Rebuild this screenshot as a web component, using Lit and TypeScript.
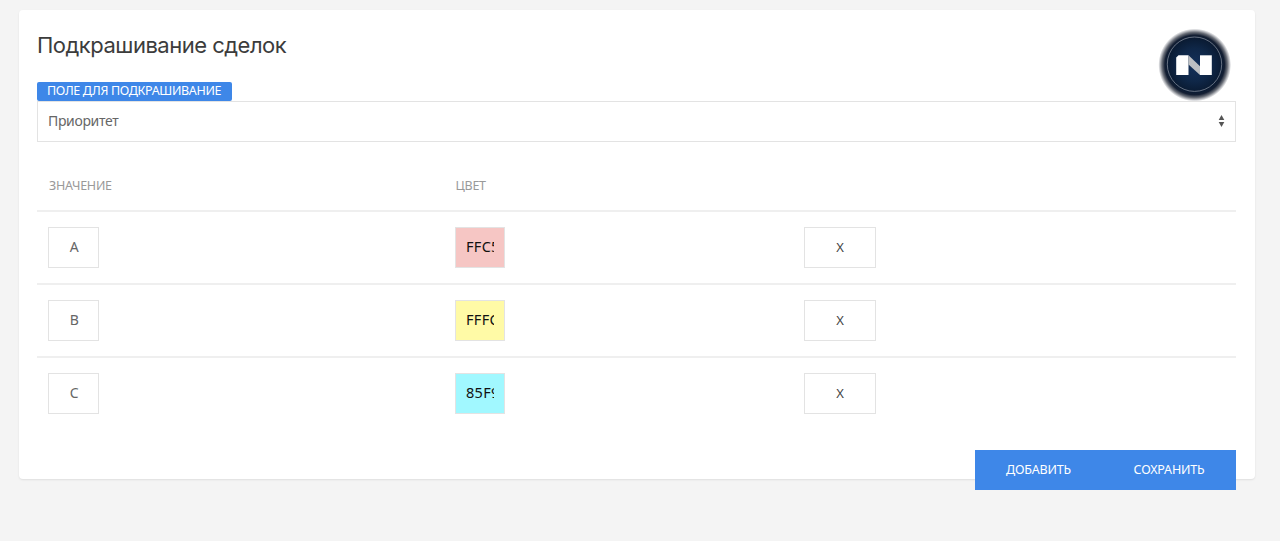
import { LitElement, html, css } from 'lit';
import { customElement, property, state } from 'lit/decorators.js';
import { styleMap } from 'lit/directives/style-map.js';

interface ColorRule {
  value: string;
  code: string;
  background: string;
}

@customElement('brand-logo')
export class BrandLogo extends LitElement {

  static styles = css`
    :host {
      display: block;
      width: 74px;
      height: 74px;
    }

    svg {
      display: block;
    }
  `;

  render() {
    return html`
      <svg width="74" height="74" viewBox="0 0 74 74">
        <defs>
          <radialGradient id="disc">
            <stop offset="0" stop-color="#14305a" />
            <stop offset="0.45" stop-color="#0f2748" />
            <stop offset="0.74" stop-color="#0a1b33" />
            <stop offset="0.82" stop-color="#141f33" />
            <stop offset="0.9" stop-color="#1c2331" stop-opacity="0.65" />
            <stop offset="1" stop-color="#2a3040" stop-opacity="0" />
          </radialGradient>
        </defs>
        <circle cx="36.7" cy="37" r="36.4" fill="url(#disc)" />
        <circle cx="36.5" cy="36.2" r="27.2" fill="none" stroke="#7d8796" stroke-width="0.8" />
        <path d="M20.5 27.3H30.5V47H18.2V29.5Z" fill="#fff" />
        <path d="M42 27.3H53.8V47H42Z" fill="#fff" />
        <path d="M30.5 27.3L42 38.2V47L30.5 36.5Z" fill="#bdbfc2" />
      </svg>
    `;
  }
}

@customElement('color-row')
export class ColorRow extends LitElement {

  static styles = css`
    :host {
      display: grid;
      flex: none;
      grid-template-columns: 406.8px 349px 1fr;
      align-items: center;
      height: 73.2px;
      padding-left: 11.2px;
      box-sizing: border-box;
      border-top: 2px solid #efefef;
    }

    .field,
    .remove {
      display: block;
      box-sizing: border-box;
      height: 41px;
      margin: 0;
      border: 1px solid #e3e3e3;
      border-radius: 0;
      outline: none;
      background: #fff;
      font-family: "Noto Sans", sans-serif;
    }

    .field {
      width: 51px;
      padding: 0 10px 2px;
      color: #666;
      font-size: 14px;
    }

    .value {
      padding-left: 11px;
      text-align: center;
    }

    .color {
      width: 50px;
      padding-bottom: 3px;
      color: #111;
      font-size: 14.5px;
      letter-spacing: 0.3px;
    }

    .remove {
      width: 72px;
      padding: 0 0 1px;
      color: #444;
      font-size: 13px;
    }
  `;

  @property({ attribute: false }) rule!: ColorRule;

  render() {
    return html`
      <div><input class="field value" .value=${this.rule.value}></div>
      <div>
        <input
          class="field color"
          style=${styleMap({ background: this.rule.background })}
          .value=${this.rule.code}
        >
      </div>
      <div><button class="remove">X</button></div>
    `;
  }
}

@customElement('app-root')
export class AppRoot extends LitElement {

  static styles = css`
    :host {
      display: block;
      box-sizing: border-box;
      height: 541px;
      padding: 10px 25px 0 19px;
      overflow: hidden;
      background: #f4f4f4;
      font-family: "Noto Sans", sans-serif;
    }

    .card {
      display: flex;
      flex-direction: column;
      box-sizing: border-box;
      height: 469px;
      padding: 18px 19px 0 18px;
      border-radius: 4px;
      background: #fff;
      box-shadow: 0 1px 2px rgba(0, 0, 0, 0.09);
    }

    .head {
      display: flex;
      flex: none;
      justify-content: space-between;
      height: 54px;
      padding-right: 4px;
    }

    h1 {
      margin: 3px 0 0;
      color: #3c3c3c;
      font-family: Inter, sans-serif;
      font-size: 22px;
      font-weight: 400;
      line-height: 28px;
      letter-spacing: -0.5px;
    }

    .label {
      flex: none;
      align-self: flex-start;
      box-sizing: border-box;
      width: 195px;
      height: 19px;
      padding-left: 10px;
      border-radius: 2px;
      background: #3e87e8;
      color: #fff;
      font-size: 12.5px;
      line-height: 18px;
      letter-spacing: -0.33px;
      white-space: nowrap;
    }

    .select {
      display: flex;
      flex: none;
      align-items: center;
      justify-content: space-between;
      box-sizing: border-box;
      height: 41px;
      padding: 0 10px 2px;
      border: 1px solid #e3e3e3;
      color: #666;
      font-size: 14px;
      letter-spacing: -0.35px;
    }

    .table-head {
      display: grid;
      flex: none;
      grid-template-columns: 406.5px 1fr;
      height: 68px;
      padding-left: 12px;
      color: #999;
      font-size: 12.5px;
      line-height: 87px;
      letter-spacing: -0.25px;
    }

    .actions {
      display: flex;
      flex: none;
      align-self: flex-end;
      margin-top: 20.4px;
    }

    .action {
      height: 40px;
      padding: 0;
      border: 0;
      background: #3e87e8;
      color: #fff;
      font-family: inherit;
      font-size: 12.5px;
      letter-spacing: -0.2px;
    }

    .add {
      width: 127px;
    }

    .save {
      width: 134px;
    }
  `;

  @state() private rules: ColorRule[] = [
    { value: 'A', code: 'FFC5C5', background: '#f6c6c4' },
    { value: 'B', code: 'FFFCA6', background: '#fffaa6' },
    { value: 'C', code: '85F9FF', background: '#a1f8ff' },
  ];

  render() {
    return html`
      <div class="card">
        <div class="head">
          <h1>Подкрашивание сделок</h1>
          <brand-logo></brand-logo>
        </div>
        <div class="label">ПОЛЕ ДЛЯ ПОДКРАШИВАНИЕ</div>
        <div class="select">
          <span>Приоритет</span>
          <svg width="7" height="12" viewBox="0 0 7 12" fill="#555">
            <path d="M3.5 0L6.3 5H0.7Z" />
            <path d="M3.5 12L6.3 7H0.7Z" />
          </svg>
        </div>
        <div class="table-head">
          <span>ЗНАЧЕНИЕ</span>
          <span>ЦВЕТ</span>
        </div>
        ${this.rules.map((rule) => html`<color-row .rule=${rule}></color-row>`)}
        <div class="actions">
          <button class="action add">ДОБАВИТЬ</button>
          <button class="action save">СОХРАНИТЬ</button>
        </div>
      </div>
    `;
  }
}
